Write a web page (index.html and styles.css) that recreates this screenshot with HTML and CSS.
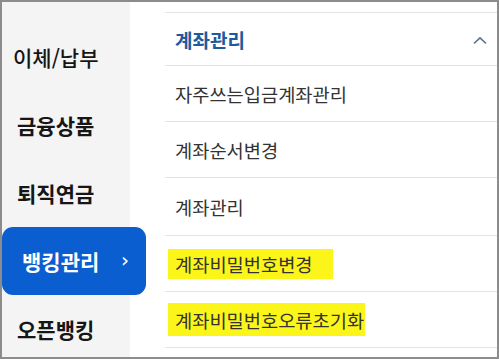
FILE: index.html
```html
<!DOCTYPE html>
<html lang="ko">
<head>
<meta charset="utf-8">
<link rel="stylesheet" href="styles.css">
</head>
<body>
<div class="frame">
  <nav class="sidebar">
    <div class="nav-item nav-item--first">이체/납부</div>
    <div class="nav-item">금융상품</div>
    <div class="nav-item">퇴직연금</div>
    <div class="nav-item nav-item--active"><span>뱅킹관리</span><span class="nav-chev">›</span></div>
    <div class="nav-item">오픈뱅킹</div>
  </nav>
  <section class="panel">
    <div class="row row--head">
      <span class="head-title">계좌관리</span>
      <svg class="chev-up" width="14" height="8" viewBox="0 0 14 8"><path d="M1.5 7 L7 1.8 L12.5 7" fill="none" stroke="#5d6f8c" stroke-width="1.6" stroke-linecap="round"/></svg>
    </div>
    <div class="row">자주쓰는입금계좌관리</div>
    <div class="row">계좌순서변경</div>
    <div class="row row--tall">계좌관리</div>
    <div class="row"><span class="hl hl--extra">계좌비밀번호변경</span></div>
    <div class="row"><span class="hl hl--tall">계좌비밀번호오류초기화</span></div>
  </section>
</div>
</body>
</html>
```
FILE: styles.css
```css
html, body {
  margin: 0;
  padding: 0;
  background: #fff;
}
.frame {
  width: 499px;
  height: 359px;
  box-sizing: border-box;
  border: 2px solid #8c8c8c;
  display: flex;
  overflow: hidden;
  background: #fff;
  font-family: "Noto Sans CJK KR", "Noto Sans", sans-serif;
}
.sidebar {
  width: 128px;
  flex-shrink: 0;
  background: #f4f4f4;
  padding-top: 21px;
  position: relative;
  z-index: 1;
}
.nav-item {
  height: 68px;
  box-sizing: border-box;
  display: flex;
  align-items: center;
  padding-left: 15px;
  font-size: 21px;
  font-weight: 700;
  color: #161616;
  white-space: nowrap;
}
.nav-item--first {
  padding-left: 11px;
  font-weight: 500;
}
.nav-item--active {
  width: 144px;
  background: #0b5ecf;
  color: #fff;
  border-radius: 11px;
  padding-left: 20px;
  padding-right: 17px;
  justify-content: space-between;
}
.nav-chev {
  font-family: "DejaVu Sans", sans-serif;
  font-weight: 400;
  font-size: 20px;
  line-height: 1;
  margin-top: -3px;
}
.panel {
  flex: 1;
  padding: 10px 0 0 35px;
}
.row {
  height: 56px;
  box-sizing: border-box;
  border-bottom: 1px solid #e3e3e3;
  display: flex;
  align-items: center;
  padding-left: 10px;
  font-size: 18.7px;
  color: #333;
  white-space: nowrap;
}
.row--head {
  height: 54px;
  border-top: 1px solid #e3e3e3;
  justify-content: space-between;
  padding-right: 10px;
}
.row--tall {
  height: 58px;
}
.head-title {
  font-size: 19px;
  font-weight: 700;
  color: #1e5a9c;
}
.chev-up {
  display: block;
  margin-top: 2px;
}
.hl {
  background: #fbf51a;
  margin-left: -7px;
  padding: 1px 0 2px 7px;
}
.hl--extra {
  padding-right: 20px;
}
.hl--tall {
  padding-top: 3px;
  padding-bottom: 3px;
  padding-right: 1px;
}
```
